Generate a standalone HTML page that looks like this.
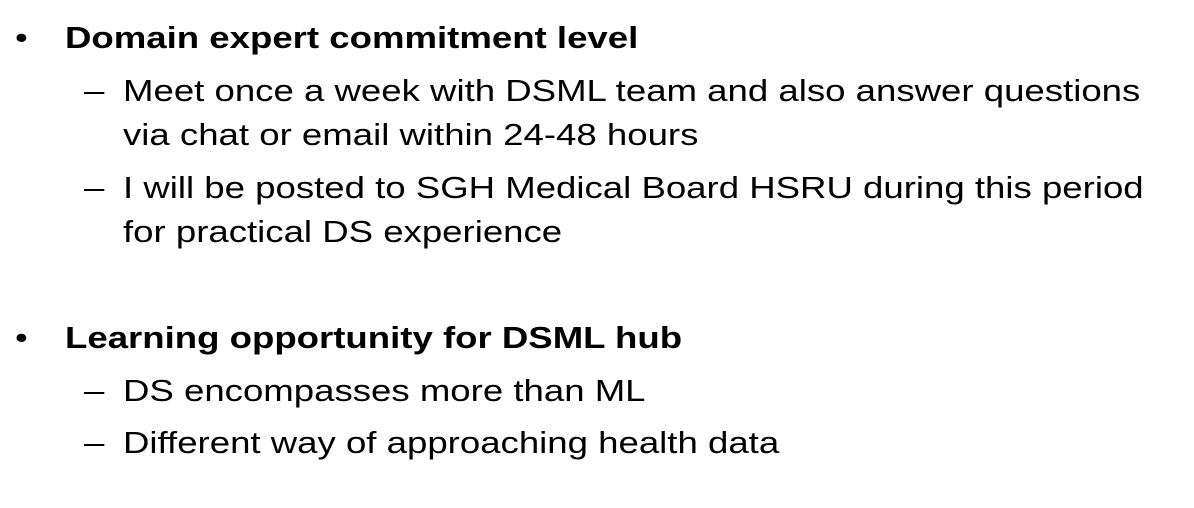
<!DOCTYPE html>
<html><head><meta charset="utf-8"><style>
html,body{margin:0;padding:0;background:#fff;width:1194px;height:508px;overflow:hidden}
body{position:relative;font-family:"Liberation Sans",Arial,sans-serif;color:#000;font-size:31px;line-height:31px}
.l{position:absolute;white-space:nowrap;transform:scaleX(1.18);transform-origin:0 0}
.b{font-weight:bold}
</style></head><body>
<div class="l" style="left:15px;top:22px">•</div>
<div class="l b" style="left:65px;top:22px">Domain expert commitment level</div>
<div class="l" style="left:84px;top:75px">–</div>
<div class="l" style="left:123px;top:75px">Meet once a week with DSML team and also answer questions</div>
<div class="l" style="left:123px;top:119px">via chat or email within 24-48 hours</div>
<div class="l" style="left:84px;top:172px">–</div>
<div class="l" style="left:123px;top:172px">I will be posted to SGH Medical Board HSRU during this period</div>
<div class="l" style="left:123px;top:216px">for practical DS experience</div>
<div class="l" style="left:15px;top:322px">•</div>
<div class="l b" style="left:65px;top:322px">Learning opportunity for DSML hub</div>
<div class="l" style="left:84px;top:375px">–</div>
<div class="l" style="left:123px;top:375px">DS encompasses more than ML</div>
<div class="l" style="left:84px;top:427px">–</div>
<div class="l" style="left:123px;top:427px">Different way of approaching health data</div>
</body></html>
